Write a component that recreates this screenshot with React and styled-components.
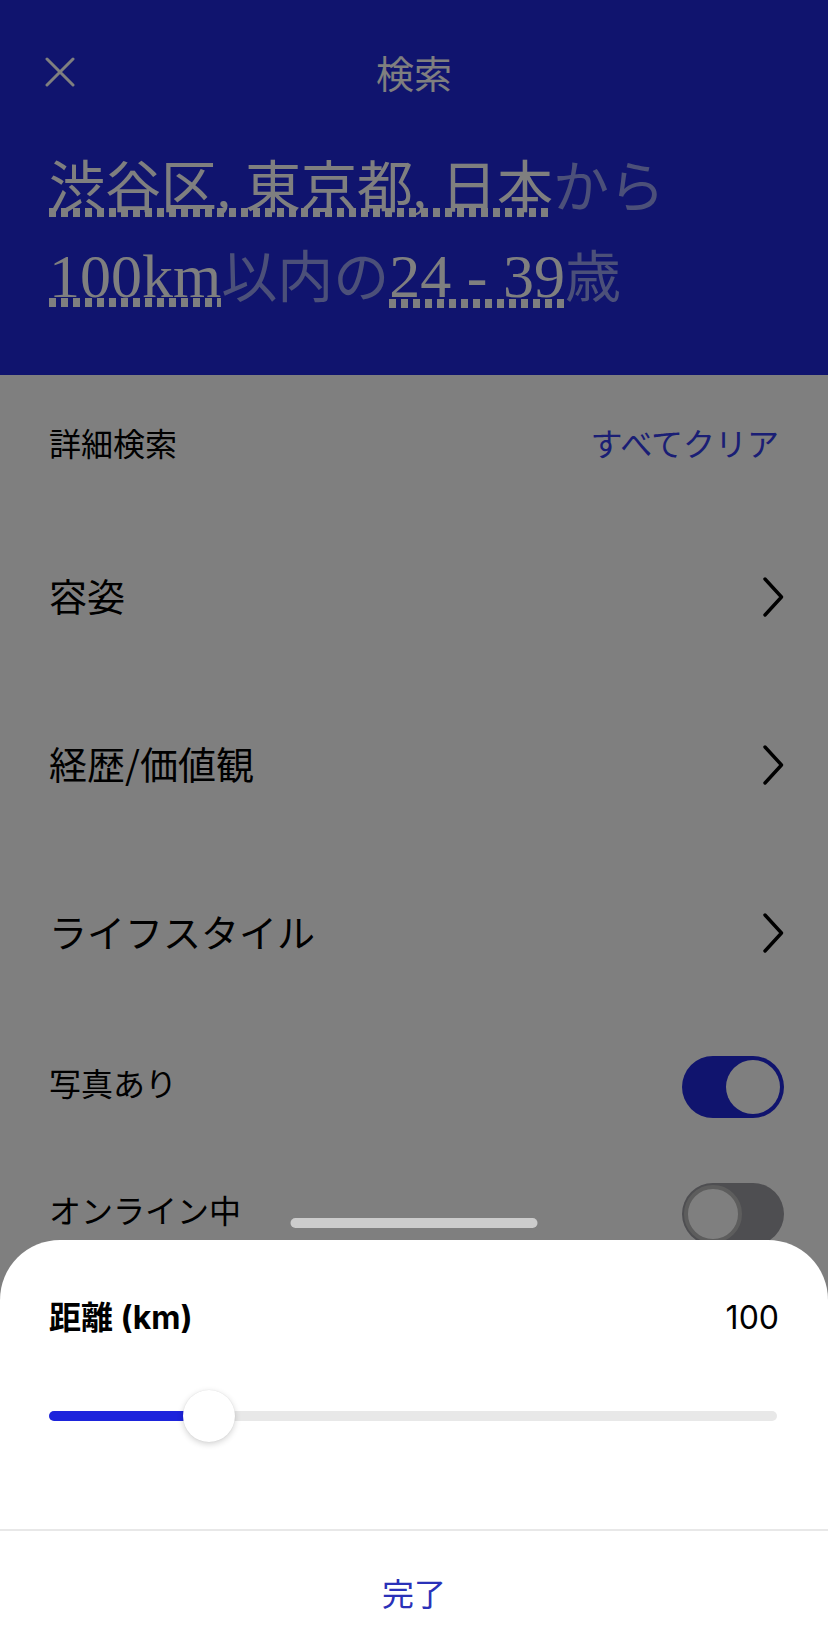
import styled, { createGlobalStyle } from "styled-components";

const GlobalStyle = createGlobalStyle`
  html, body {
    margin: 0;
    padding: 0;
    background: #ffffff;
  }
  body {
    font-family: Inter, "Noto Sans CJK JP", sans-serif;
    height: 1643px;
    overflow: hidden;
  }
`;

const Page = styled.div`
  width: 828px;
  background: #ffffff;
  color: #000000;
`;

const Header = styled.header`
  background: #2028dc;
  height: 375px;
  color: #ffffff;
`;

const NavBar = styled.div`
  display: grid;
  grid-template-columns: 1fr auto 1fr;
  align-items: center;
  height: 144px;
  padding: 0 45px;
`;

const IconButton = styled.button`
  display: flex;
  width: 30px;
  height: 30px;
  padding: 0;
  border: none;
  background: none;
  color: inherit;
`;

const NavTitle = styled.h1`
  margin: 0;
  font-family: "Noto Sans CJK JP", sans-serif;
  font-size: 38px;
  font-weight: 400;
  line-height: 1;
`;

const Headline = styled.p`
  margin: 0;
  padding-left: 49px;
  font-family: "Liberation Serif", "Noto Sans CJK JP", serif;
  font-size: 56px;
  line-height: 88px;
  color: #98a0f2;
  white-space: nowrap;
`;

const Highlight = styled.span`
  color: #ffffff;
  font-size: ${({ $latin }) => ($latin ? "62px" : "inherit")};
  background-image: repeating-linear-gradient(
    to right,
    #ffffff 0 7px,
    transparent 7px 12px
  );
  background-size: 100% 9px;
  background-repeat: no-repeat;
  background-position: 0 calc(100% - 2px);
`;

const Latin = styled.span`
  font-size: 62px;
`;

const Section = styled.section`
  padding: 0 44px 0 49px;
  font-family: "Noto Sans CJK JP", sans-serif;
`;

const SubHeader = styled.div`
  display: flex;
  align-items: center;
  justify-content: space-between;
  height: 138px;
  font-size: 32px;
  line-height: 1;
`;

const RowLabel = styled.span`
  padding-bottom: ${({ $lift }) => $lift || 4}px;
`;

const ClearButton = styled.button`
  margin-right: 5px;
  padding: 0 0 4px;
  border: none;
  background: none;
  font-family: "Noto Sans CJK JP", sans-serif;
  font-size: 32px;
  line-height: 1;
  color: #343cea;
`;

const NavRow = styled.div`
  display: flex;
  align-items: center;
  justify-content: space-between;
  height: 168px;
  font-size: 38px;
  line-height: 1;
`;

const ToggleList = styled.div`
  padding-top: 6px;
`;

const ToggleRow = styled.div`
  display: flex;
  align-items: center;
  justify-content: space-between;
  height: 127px;
  font-size: 32px;
  line-height: 1;
`;

const Switch = styled.span`
  display: flex;
  justify-content: ${({ $on }) => ($on ? "flex-end" : "flex-start")};
  align-items: center;
  box-sizing: border-box;
  width: 102px;
  height: 62px;
  padding: ${({ $on }) => ($on ? "4px" : "2px")};
  border-radius: 31px;
  background: ${({ $on }) => ($on ? "#2028dc" : "#9c9ca2")};
`;

const Knob = styled.span`
  box-sizing: border-box;
  width: ${({ $on }) => ($on ? "54px" : "58px")};
  height: ${({ $on }) => ($on ? "54px" : "58px")};
  border-radius: 50%;
  background: #ffffff;
  border: ${({ $on }) => ($on ? "none" : "4px solid #bababa")};
`;

const Backdrop = styled.div`
  position: fixed;
  inset: 0;
  background: rgba(0, 0, 0, 0.5);
`;

const Sheet = styled.div`
  position: fixed;
  left: 0;
  right: 0;
  bottom: 0;
  height: 403px;
  display: flex;
  flex-direction: column;
  background: #ffffff;
  border-radius: 60px 60px 0 0;
`;

const Handle = styled.span`
  position: absolute;
  top: -22px;
  left: 50%;
  width: 247px;
  height: 10px;
  border-radius: 5px;
  background: #cccccc;
  transform: translateX(-50%);
`;

const SheetBody = styled.div`
  flex: 1;
  padding: 60px 49px 0 49px;
`;

const ValueRow = styled.div`
  display: flex;
  align-items: center;
  justify-content: space-between;
  height: 36px;
  font-size: 32px;
  line-height: 1;
  color: #000000;
`;

const Label = styled.span`
  font-weight: 700;
`;

const SliderWrap = styled.div`
  margin: 54px 2px 0 0;
  padding: 21px 0;
`;

const Track = styled.div`
  position: relative;
  height: 10px;
  border-radius: 5px;
  background: #e8e8e8;
`;

const Fill = styled.div`
  height: 100%;
  border-radius: 5px;
  background: #1d24dc;
`;

const Thumb = styled.span`
  position: absolute;
  top: -21px;
  width: 52px;
  height: 52px;
  margin-left: -26px;
  border-radius: 50%;
  background: #ffffff;
  box-shadow: 0 2px 6px rgba(0, 0, 0, 0.18), 0 0 1px rgba(0, 0, 0, 0.12);
`;

const DoneBar = styled.div`
  display: flex;
  justify-content: center;
  align-items: center;
  height: 114px;
  padding-top: 10px;
  box-sizing: border-box;
  border-top: 2px solid #e8e8e8;
`;

const DoneButton = styled.button`
  padding: 0;
  border: none;
  background: none;
  font-family: "Noto Sans CJK JP", sans-serif;
  font-size: 32px;
  line-height: 1;
  color: #2a31b8;
`;

const CloseIcon = () => (
  <svg width="30" height="30" viewBox="0 0 30 30" fill="none">
    <path d="M2 2L28 28M28 2L2 28" stroke="currentColor" strokeWidth="3" strokeLinecap="round" />
  </svg>
);

const Chevron = () => (
  <svg width="22" height="40" viewBox="0 0 22 40" fill="none">
    <path d="M3 2L19.5 20L3 38" stroke="#000" strokeWidth="3.4" strokeLinecap="round" strokeLinejoin="round" />
  </svg>
);

const categories = ["容姿", "経歴/価値観", "ライフスタイル"];
const toggles = [
  { label: "写真あり", on: true },
  { label: "オンライン中", on: false },
];

const distance = { value: 100, percent: 22 };

export default function App() {
  return (
    <>
      <GlobalStyle />
      <Page>
        <Header>
          <NavBar>
            <IconButton aria-label="閉じる">
              <CloseIcon />
            </IconButton>
            <NavTitle>検索</NavTitle>
            <span />
          </NavBar>
          <Headline>
            <Highlight>渋谷区, 東京都, 日本</Highlight>から
            <br />
            <Highlight>
              <Latin>100km</Latin>
            </Highlight>
            以内の<Highlight $latin>24 - 39</Highlight>歳
          </Headline>
        </Header>
        <Section>
          <SubHeader>
            <RowLabel>詳細検索</RowLabel>
            <ClearButton>すべてクリア</ClearButton>
          </SubHeader>
          {categories.map((name) => (
            <NavRow key={name}>
              <RowLabel>{name}</RowLabel>
              <Chevron />
            </NavRow>
          ))}
          <ToggleList>
            {toggles.map((t) => (
              <ToggleRow key={t.label}>
                <RowLabel $lift={10}>{t.label}</RowLabel>
                <Switch $on={t.on}>
                  <Knob $on={t.on} />
                </Switch>
              </ToggleRow>
            ))}
          </ToggleList>
        </Section>
      </Page>
      <Backdrop />
      <Sheet>
        <Handle />
        <SheetBody>
          <ValueRow>
            <Label>距離 (km)</Label>
            <span>{distance.value}</span>
          </ValueRow>
          <SliderWrap>
            <Track>
              <Fill style={{ width: `${distance.percent}%` }} />
              <Thumb style={{ left: `${distance.percent}%` }} />
            </Track>
          </SliderWrap>
        </SheetBody>
        <DoneBar>
          <DoneButton>完了</DoneButton>
        </DoneBar>
      </Sheet>
    </>
  );
}
